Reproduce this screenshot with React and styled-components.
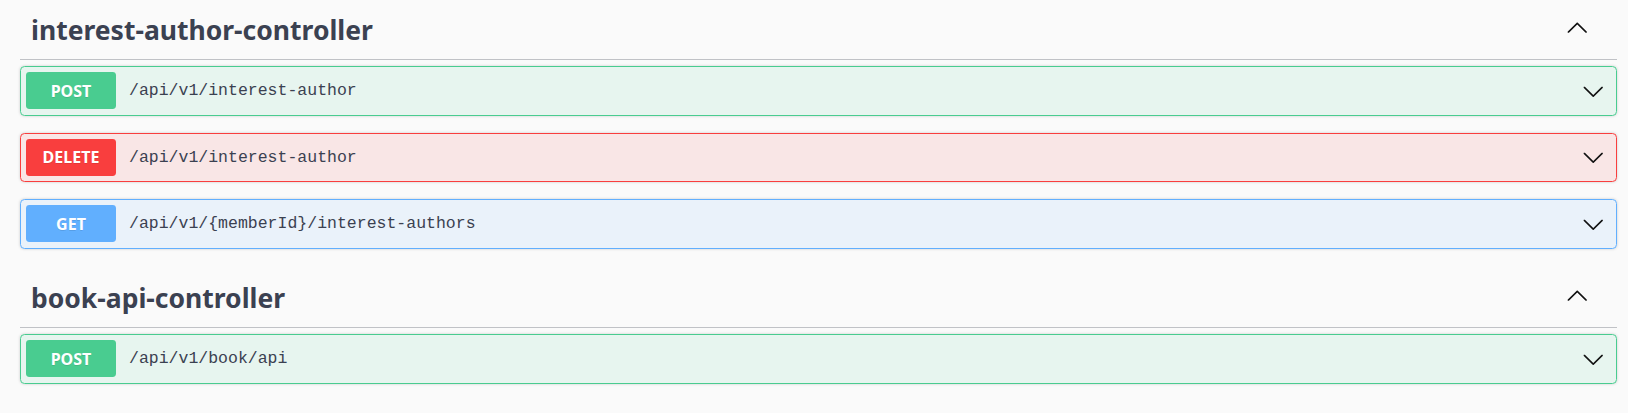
import React from "react";
import styled, { createGlobalStyle } from "styled-components";

const GlobalStyle = createGlobalStyle`
  html, body {
    margin: 0;
    padding: 0;
    background: #fafafa;
  }
`;

const methods = {
  post: { color: "#49cc90", bg: "rgba(73, 204, 144, 0.1)" },
  delete: { color: "#f93e3e", bg: "rgba(249, 62, 62, 0.1)" },
  get: { color: "#61affe", bg: "rgba(97, 175, 254, 0.1)" },
};

const tags = [
  {
    name: "interest-author-controller",
    ops: [
      { method: "post", path: "/api/v1/interest-author" },
      { method: "delete", path: "/api/v1/interest-author" },
      { method: "get", path: "/api/v1/{memberId}/interest-authors" },
    ],
  },
  {
    name: "book-api-controller",
    ops: [{ method: "post", path: "/api/v1/book/api" }],
  },
];

function Arrow({ up }) {
  return (
    <ArrowSvg
      viewBox="0 0 20 20"
      width="22.5"
      height="22.5"
      $up={up}
      aria-hidden="true"
    >
      <path d="M17.418 6.109c.272-.268.709-.268.979 0s.271.701 0 .969l-7.908 7.83c-.27.268-.707.268-.979 0l-7.908-7.83c-.27-.268-.27-.701 0-.969.271-.268.709-.268.979 0L10 13.25l7.418-7.141z" />
    </ArrowSvg>
  );
}

function App() {
  return (
    <Page>
      <GlobalStyle />
      {tags.map((tag) => (
        <TagSection key={tag.name}>
          <TagHeading>
            <TagName>{tag.name}</TagName>
            <HeadingArrow>
              <Arrow up />
            </HeadingArrow>
          </TagHeading>
          {tag.ops.map((op) => (
            <OpBlock key={op.method + op.path} $method={op.method}>
              <MethodBadge $method={op.method}>
                {op.method.toUpperCase()}
              </MethodBadge>
              <OpPath>{op.path}</OpPath>
              <OpArrow>
                <Arrow />
              </OpArrow>
            </OpBlock>
          ))}
        </TagSection>
      ))}
    </Page>
  );
}

const Page = styled.div`
  padding: 0 11px 0 20px;
  font-family: "Noto Sans", "Noto Sans CJK KR", sans-serif;
  color: #3b4151;
`;

const TagSection = styled.div`
  padding-bottom: 2.5px;
`;

const TagHeading = styled.h3`
  display: flex;
  align-items: center;
  box-sizing: border-box;
  height: 60px;
  margin: 0 0 6px;
  padding: 0 29px 0 11px;
  border-bottom: 1px solid rgba(59, 65, 81, 0.3);
  font-size: 26.5px;
  font-weight: 700;
  color: #3b4151;
`;

const TagName = styled.span`
  flex: 1;
  margin-top: 1px;
`;

const HeadingArrow = styled.span`
  display: flex;
  margin-top: -2px;
`;

const ArrowSvg = styled.svg`
  display: block;
  fill: #111;
  transform: ${(p) => (p.$up ? "rotate(180deg)" : "none")};
`;

const OpBlock = styled.div`
  display: flex;
  align-items: center;
  box-sizing: border-box;
  height: 49.5px;
  margin-bottom: 17px;
  padding: 0 12px 0 5px;
  border: 1px solid ${(p) => methods[p.$method].color};
  border-radius: 4.5px;
  background: ${(p) => methods[p.$method].bg};
  box-shadow: 0 0 3px rgba(0, 0, 0, 0.19);
`;

const MethodBadge = styled.span`
  display: flex;
  align-items: center;
  justify-content: center;
  width: 90px;
  height: 37px;
  border-radius: 3.4px;
  background: ${(p) => methods[p.$method].color};
  color: #fff;
  font-size: 16px;
  font-weight: 700;
  text-shadow: 0 1px 0 rgba(0, 0, 0, 0.1);
`;

const OpPath = styled.span`
  flex: 1;
  margin-left: 13px;
  font-family: "Liberation Mono", "DejaVu Sans Mono", monospace;
  font-size: 16.5px;
  color: #3b4151;
`;

const OpArrow = styled.span`
  display: flex;
`;

export default App;
